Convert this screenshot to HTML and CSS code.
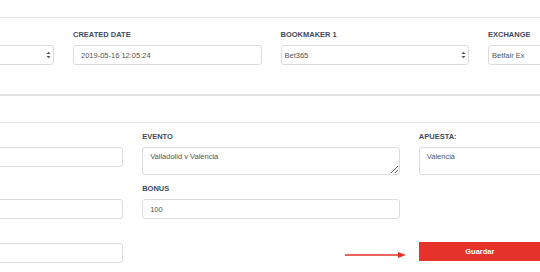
FILE: index.html
```html
<!DOCTYPE html>
<html lang="es">
<head>
    <meta charset="UTF-8">
    <meta name="viewport" content="width=device-width, initial-scale=1.0">
    <title>Editar apuesta</title>
    <link rel="stylesheet" href="styles.css">
</head>
<body>
    <div class="page">
        <div class="panel panel-top">
            <div class="row row-4">
                <div class="field">
                    <label></label>
                    <div class="select-wrap">
                        <select><option></option></select>
                        <svg class="caret" width="5" height="8" viewBox="0 0 5 8"><path d="M0.5 3L2.5 0.8L4.5 3Z M0.5 5L2.5 7.2L4.5 5Z" fill="#555"/></svg>
                    </div>
                </div>
                <div class="field">
                    <label>Created date</label>
                    <input type="text" value="2019-05-16 12:05:24">
                </div>
                <div class="field">
                    <label>Bookmaker 1</label>
                    <div class="select-wrap">
                        <select><option>Bet365</option></select>
                        <svg class="caret" width="5" height="8" viewBox="0 0 5 8"><path d="M0.5 3L2.5 0.8L4.5 3Z M0.5 5L2.5 7.2L4.5 5Z" fill="#555"/></svg>
                    </div>
                </div>
                <div class="field">
                    <label>Exchange</label>
                    <div class="select-wrap">
                        <select><option>Betfair Ex</option></select>
                        <svg class="caret" width="5" height="8" viewBox="0 0 5 8"><path d="M0.5 3L2.5 0.8L4.5 3Z M0.5 5L2.5 7.2L4.5 5Z" fill="#555"/></svg>
                    </div>
                </div>
            </div>
        </div>

        <div class="panel panel-empty"></div>

        <div class="panel panel-form">
            <div class="row row-3">
                <div class="field">
                    <label></label>
                    <input type="text" value="">
                </div>
                <div class="field">
                    <label>Evento</label>
                    <textarea>Valladolid v Valencia</textarea>
                </div>
                <div class="field">
                    <label>Apuesta:</label>
                    <textarea>Valencia</textarea>
                </div>

                <div class="field">
                    <label></label>
                    <input type="text" value="">
                </div>
                <div class="field">
                    <label>Bonus</label>
                    <input type="text" value="100">
                </div>
                <div class="field"></div>

                <div class="field">
                    <label></label>
                    <input type="text" value="">
                </div>
                <div class="field"></div>
                <div class="field actions">
                    <svg class="arrow" width="62" height="8" viewBox="0 0 62 8"><path d="M0 4H54" stroke="#e5322a" stroke-width="1.5"/><path d="M53 1L61 4L53 7Z" fill="#e5322a"/></svg>
                    <button type="submit">Guardar</button>
                </div>
            </div>
        </div>
    </div>
</body>
</html>
```

FILE: styles.css
```css
body {
    margin: 0;
    font-family: "Liberation Sans", Arial, sans-serif;
    background-color: #ffffff;
    color: #555555;
    overflow: hidden;
}
.page {
    width: 830px;
    margin-left: -144px;
    padding-top: 17px;
}
.panel-top {
    padding: 12px 0 20px;
    border-top: 1px solid #e8e8e8;
    border-bottom: 2px solid #e3e3e3;
}
.panel-empty {
    height: 26px;
    border-bottom: 1px solid #e6e6e6;
}
.panel-form {
    padding-top: 9px;
}
.row {
    display: grid;
    align-items: start;
}
.row-4 {
    grid-template-columns: repeat(4, 1fr);
}
.row-3 {
    grid-template-columns: repeat(3, 1fr);
}
.field {
    padding: 0 9.5px;
    margin-bottom: 9px;
}
.field label {
    display: block;
    height: 10px;
    font-size: 7.5px;
    line-height: 10px;
    font-weight: bold;
    text-transform: uppercase;
    color: #3e4a5c;
    margin-bottom: 5px;
}
input, select, textarea {
    display: block;
    box-sizing: border-box;
    width: 100%;
    font-family: "Liberation Sans", Arial, sans-serif;
    font-size: 7.5px;
    color: #555555;
    background-color: #ffffff;
    border: 1px solid #dcdcdc;
    border-radius: 3px;
    outline: none;
    margin: 0;
}
input {
    height: 20px;
    padding: 0 7px;
}
textarea {
    height: 28px;
    padding: 4px 7px;
    line-height: 10px;
}
.select-wrap {
    position: relative;
}
select {
    height: 20px;
    padding: 0 3px;
    appearance: none;
    -webkit-appearance: none;
}
.caret {
    position: absolute;
    right: 3px;
    top: 6px;
}
.actions {
    position: relative;
    padding-top: 14px;
}
.arrow {
    position: absolute;
    left: -64px;
    top: 23px;
}
button {
    display: block;
    width: 122px;
    height: 19px;
    border: none;
    border-radius: 0;
    background-color: #e5322a;
    color: #ffffff;
    font-family: "Liberation Sans", Arial, sans-serif;
    font-size: 7.5px;
    font-weight: bold;
    cursor: pointer;
}
button:hover {
    background-color: #cf2a23;
}
```
